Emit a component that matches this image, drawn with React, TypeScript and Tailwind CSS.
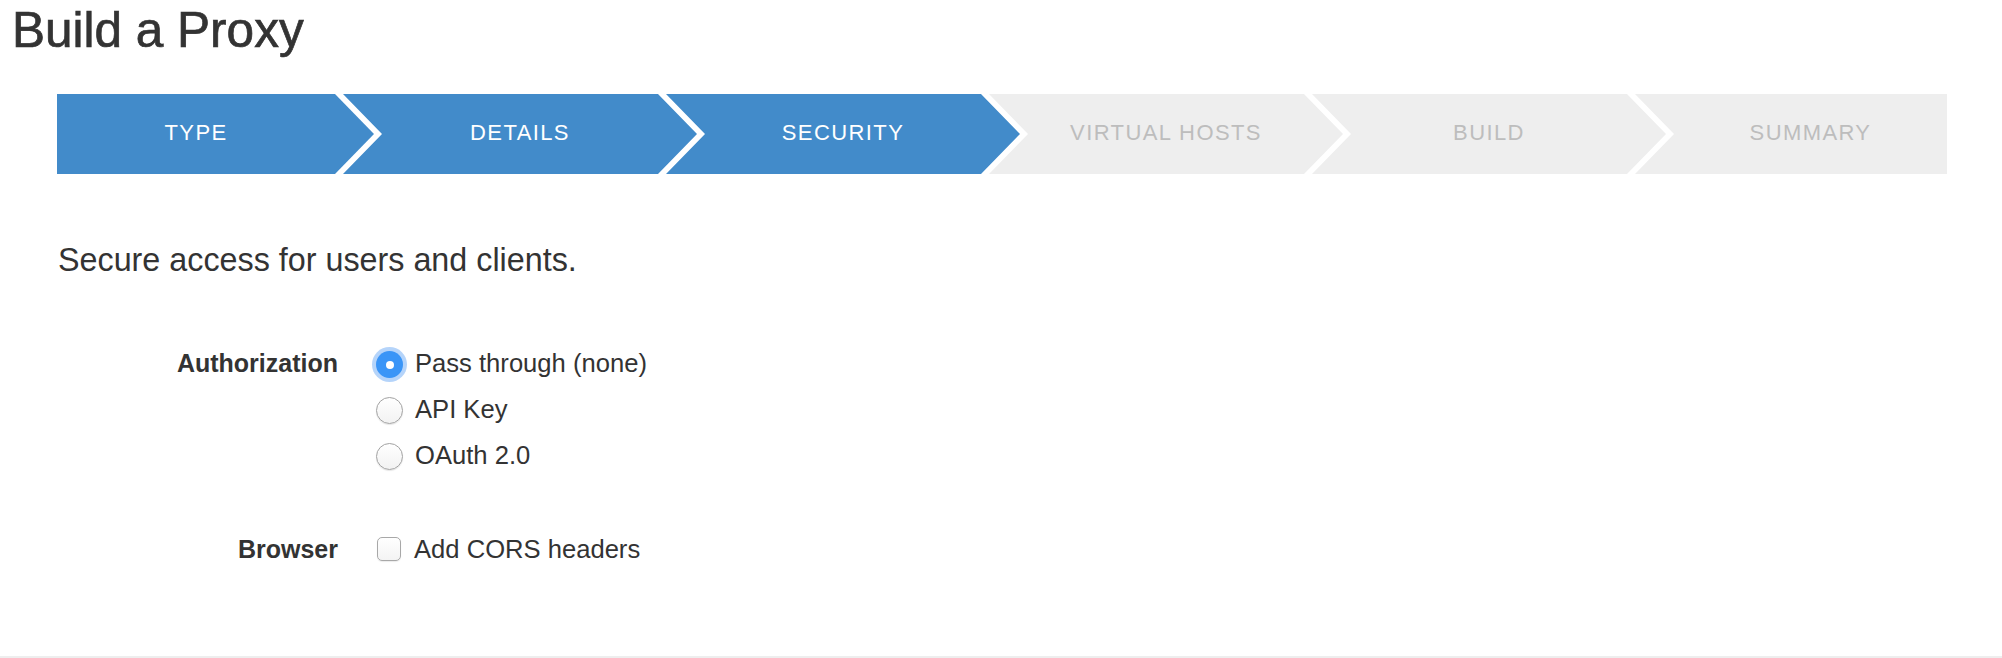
const steps = [
  {
    label: "TYPE",
    active: true,
    className:
      "w-[317px] pr-[39px] [clip-path:polygon(0_0,278px_0,317px_50%,278px_100%,0_100%)]",
  },
  {
    label: "DETAILS",
    active: true,
    className:
      "w-[354px] -ml-[31px] px-[39px] [clip-path:polygon(0_0,315px_0,354px_50%,315px_100%,0_100%,39px_50%)]",
  },
  {
    label: "SECURITY",
    active: true,
    className:
      "w-[354px] -ml-[31px] px-[39px] [clip-path:polygon(0_0,315px_0,354px_50%,315px_100%,0_100%,39px_50%)]",
  },
  {
    label: "VIRTUAL HOSTS",
    active: false,
    className:
      "w-[354px] -ml-[31px] px-[39px] [clip-path:polygon(0_0,315px_0,354px_50%,315px_100%,0_100%,39px_50%)]",
  },
  {
    label: "BUILD",
    active: false,
    className:
      "w-[354px] -ml-[31px] px-[39px] [clip-path:polygon(0_0,315px_0,354px_50%,315px_100%,0_100%,39px_50%)]",
  },
  {
    label: "SUMMARY",
    active: false,
    className:
      "w-[312px] -ml-[31px] pl-[39px] [clip-path:polygon(0_0,100%_0,100%_100%,0_100%,39px_50%)]",
  },
];

const authOptions = [
  { id: "none", label: "Pass through (none)" },
  { id: "apikey", label: "API Key" },
  { id: "oauth", label: "OAuth 2.0" },
];

function Radio({ checked }: { checked: boolean }) {
  if (checked) {
    return (
      <span className="flex h-[27px] w-[27px] shrink-0 items-center justify-center rounded-full bg-[#3a95f7] shadow-[0_0_0_4px_rgba(120,176,245,0.55)]">
        <span className="block h-[8px] w-[8px] rounded-full bg-white" />
      </span>
    );
  }
  return (
    <span className="block h-[27px] w-[27px] shrink-0 rounded-full border border-[#a2a2a2] bg-gradient-to-b from-white to-[#f2f2f2] shadow-[0_1px_1px_rgba(0,0,0,0.1)]" />
  );
}

export default function App() {
  const selected = "none";

  return (
    <div className="min-h-screen bg-white font-['Liberation_Sans',Arial,sans-serif] text-[#333]">
      <div className="border-b-2 border-[#eeeeee] pb-[84px]">
        <h1 className="pl-[12px] pt-[6px] text-[49.5px] leading-[48px] text-[#333] [-webkit-text-stroke:0.7px_#333]">
          Build a Proxy
        </h1>

        <div className="ml-[57px] mt-[40px] flex w-[1890px]">
          {steps.map((step) => (
            <div
              key={step.label}
              className={[
                "flex h-[80px] shrink-0 items-center justify-center pb-[3px] text-[22px] tracking-[1.4px]",
                step.active
                  ? "bg-[#428bca] text-white"
                  : "bg-[#eeeeee] text-[#bdbdbd]",
                step.className,
              ].join(" ")}
            >
              {step.label}
            </div>
          ))}
        </div>

        <p className="ml-[58px] mt-[66px] text-[32.3px] leading-[40px]">
          Secure access for users and clients.
        </p>

        <div className="ml-[57px] mt-[60px] grid grid-cols-[281px_auto] gap-x-[38px] gap-y-[48px] text-[25.6px]">
          <div className="h-[46px] text-right text-[25px] font-bold leading-[46px]">
            Authorization
          </div>
          <div className="flex flex-col">
            {authOptions.map((opt) => (
              <label
                key={opt.id}
                className="flex h-[46px] items-center gap-[12px] leading-[46px]"
              >
                <span className="flex pt-[3px]">
                  <Radio checked={opt.id === selected} />
                </span>
                <span>{opt.label}</span>
              </label>
            ))}
          </div>

          <div className="h-[46px] text-right text-[25px] font-bold leading-[46px]">
            Browser
          </div>
          <label className="flex h-[46px] items-center gap-[13px] pl-[1px] leading-[46px]">
            <span className="block h-[24px] w-[24px] shrink-0 rounded-[5px] border border-[#a8a8a8] bg-gradient-to-b from-white to-[#f4f4f4] shadow-[0_1px_1px_rgba(0,0,0,0.08)]" />
            <span>Add CORS headers</span>
          </label>
        </div>
      </div>
    </div>
  );
}
